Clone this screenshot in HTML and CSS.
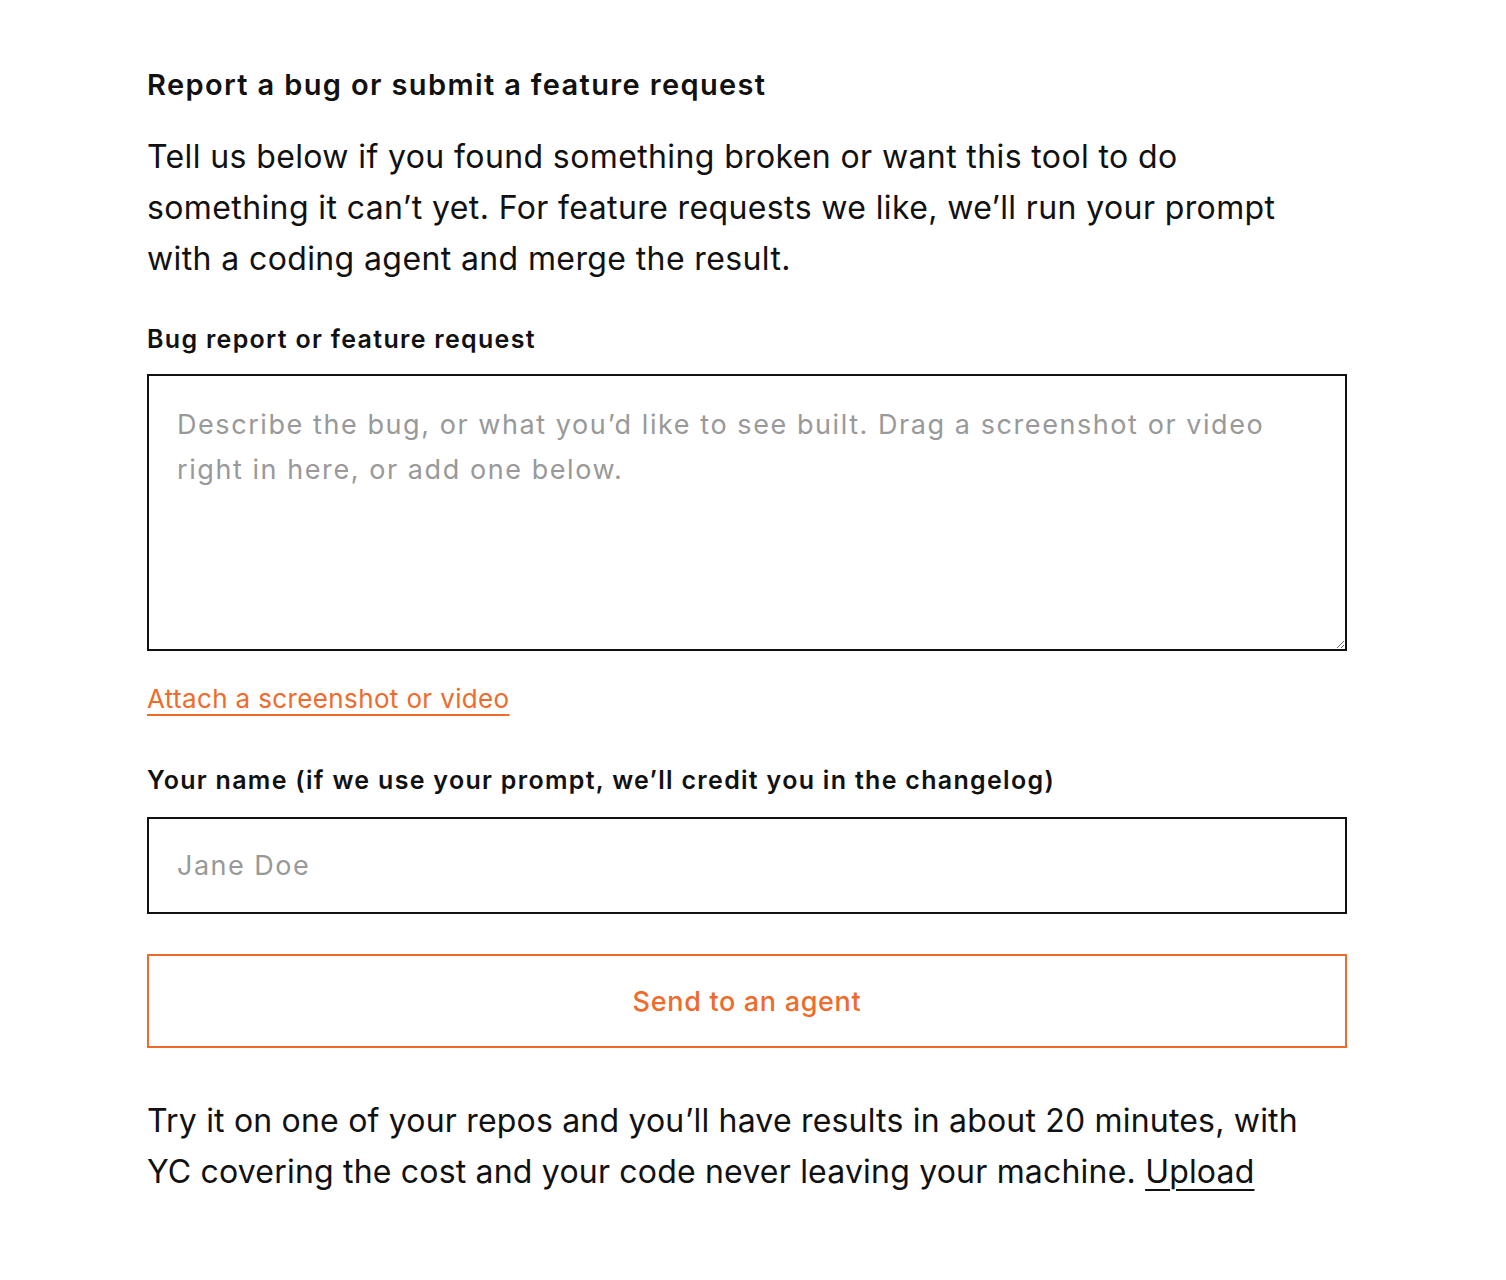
FILE: index.html
```html
<!DOCTYPE html>
<html>
<head>
  <title>Feedback</title>
  <link rel="stylesheet" href="styles.css">
</head>
<body>
  <div class="feedback">
    <h2>Report a bug or submit a feature request</h2>
    <p class="intro">Tell us below if you found something broken or want this tool to do something it can’t yet. For feature requests we like, we’ll run your prompt with a coding agent and merge the result.</p>

    <form id="feedbackForm">
      <label for="request">Bug report or feature request</label>
      <textarea id="request" name="request" placeholder="Describe the bug, or what you’d like to see built. Drag a screenshot or video right in here, or add one below."></textarea>

      <a href="#" class="attach">Attach a screenshot or video</a>

      <label for="author">Your name (if we use your prompt, we’ll credit you in the changelog)</label>
      <input type="text" id="author" name="author" placeholder="Jane Doe">

      <button type="submit">Send to an agent</button>
    </form>

    <p class="outro">Try it on one of your repos and you’ll have results in about 20 minutes, with YC covering the cost and your code never leaving your machine. <a href="#">Upload</a></p>
  </div>
</body>
</html>
```

FILE: styles.css
```css
body {
  font-family: Inter, "Noto Sans", sans-serif;
  background-color: #fff;
  color: #111;
  margin: 0;
  padding: 0;
}

.feedback {
  width: 1200px;
  margin-left: 147px;
  padding-top: 66px;
}

h2 {
  font-size: 29px;
  font-weight: 600;
  letter-spacing: 0.047em;
  line-height: 38px;
  margin: 0 0 27px;
}

.intro,
.outro {
  max-width: 1190px;
  font-size: 32px;
  letter-spacing: 0.012em;
  line-height: 51px;
  margin: 0;
}

form {
  display: flex;
  flex-direction: column;
  align-items: flex-start;
}

label {
  display: block;
  font-size: 25px;
  font-weight: 600;
  letter-spacing: 0.052em;
  line-height: 34px;
  margin-top: 38px;
  margin-bottom: 18px;
}

textarea,
input[type="text"] {
  box-sizing: border-box;
  width: 100%;
  border: 2px solid #111;
  border-radius: 0;
  font-family: inherit;
  font-size: 27px;
  color: #111;
  background: #fff;
}

textarea {
  height: 277px;
  padding: 26px 28px;
  line-height: 45px;
  letter-spacing: 0.058em;
  resize: vertical;
}

input[type="text"] {
  height: 97px;
  padding: 0 28px;
  letter-spacing: 0.055em;
}

textarea::placeholder,
input::placeholder {
  color: #999;
}

.attach {
  margin-top: 30px;
  font-size: 26px;
  letter-spacing: 0.014em;
  line-height: 36px;
  color: #ef6b2c;
  text-decoration: underline;
  text-underline-offset: 6px;
  text-decoration-thickness: 2px;
}

.attach + label {
  margin-top: 46px;
  margin-bottom: 20px;
}

button[type="submit"] {
  box-sizing: border-box;
  width: 100%;
  height: 94px;
  margin-top: 40px;
  background: #fff;
  border: 2px solid #ef6b2c;
  border-radius: 0;
  color: #ef6b2c;
  font-family: inherit;
  font-size: 27px;
  font-weight: 500;
  letter-spacing: 0.025em;
  cursor: pointer;
}

.outro {
  margin-top: 47px;
  letter-spacing: 0.006em;
}

.outro a {
  color: #111;
  text-underline-offset: 6px;
  text-decoration-thickness: 2px;
}
```
